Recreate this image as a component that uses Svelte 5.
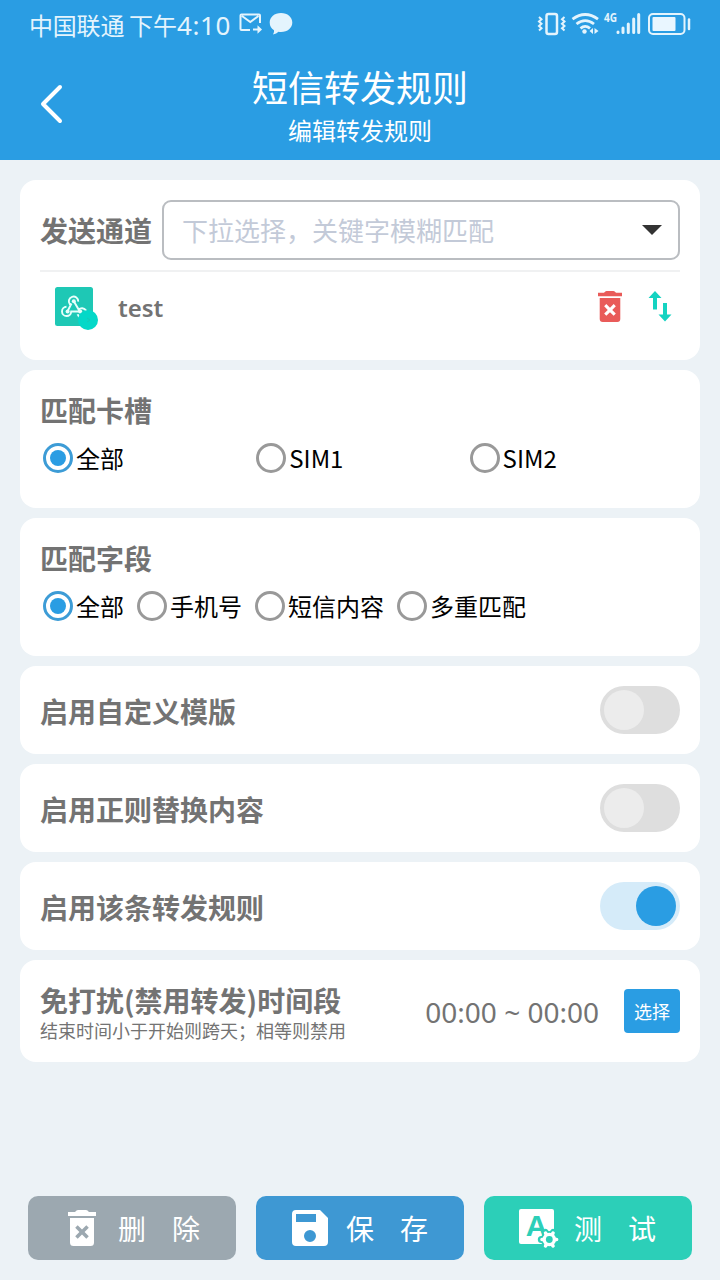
<script>
  const sims = ['全部', 'SIM1', 'SIM2'];
  const fields = ['全部', '手机号', '短信内容', '多重匹配'];
  let sim = $state(0);
  let field = $state(0);
  let switches = $state([
    { label: '启用自定义模版', on: false },
    { label: '启用正则替换内容', on: false },
    { label: '启用该条转发规则', on: true }
  ]);
</script>

{#snippet radio(label, on, pick)}
  <button class="radio" class:on onclick={pick}>
    <span class="ring"></span><span class="radio-label">{label}</span>
  </button>
{/snippet}

{#snippet trash()}
  <path fill-rule="evenodd" d="M0 2H7L8.500 .6Q9.200 0 10 0H18Q18.800 0 19.500 .6L21 2H28V6H0ZM2 8H26V32.500Q26 36 22.500 36H5.500Q2 36 2 32.500ZM9.700 15.200L7.200 17.700 11.400 22 7.200 26.300 9.700 28.800 14 24.600 18.300 28.800 20.800 26.300 16.600 22 20.800 17.700 18.300 15.200 14 19.400Z" />
{/snippet}

<div class="screen">
  <header>
    <div class="status">
      <span class="carrier">中国联通</span>
      <span class="clock">下午<span class="num">4:10</span></span>
      <svg class="mail" width="24" height="22" viewBox="0 0 24 22" fill="none" stroke="#e4f4fd" stroke-width="2">
        <path d="M11 18H2.500Q1.500 18 1.500 17V3.500Q1.500 2.500 2.500 2.500H20Q21 2.500 21 3.500V11M3 4L11.300 10 19.500 4M14 17.500H20" />
        <path d="M18.500 13.300L23 17.500 18.500 21.700Z" fill="#e4f4fd" stroke="none" />
      </svg>
      <svg class="bubble" width="24" height="22" viewBox="0 0 24 22" fill="#e4f4fd">
        <path d="M12 0C18.600 0 23.300 4.200 23.300 9.500S18.600 19 12 19Q10.700 19 9.500 18.800 7.500 21 4 21.500 5.500 19.500 5 17.200 .7 14.500 .7 9.500C.7 4.200 5.400 0 12 0Z" />
      </svg>
      <span class="spacer"></span>
      <svg class="signals" width="154" height="26" viewBox="0 0 154 26" fill="none" stroke="#e4f4fd">
        <rect x="9.500" y="3" width="10.500" height="20" rx="2" stroke-width="2.500" />
        <path stroke-width="2" d="M2 6L4.500 8.200 2 10.500 4.500 12.700 2 15 4.500 17.200 2 19.500M27.500 6L25 8.200 27.500 10.500 25 12.700 27.500 15 25 17.200 27.500 19.500" />
        <path stroke-width="2.800" d="M35.500 8.200Q48.200-1.200 61 8.200M39.500 13Q48.200 6.200 57 13M43.500 17.300Q48.200 13.500 53 17.300" />
        <circle cx="47.500" cy="20.500" r="2.200" fill="#e4f4fd" stroke="none" />
        <path d="M56 17V23L52.500 20ZM57.500 17V23L61.500 20Z" fill="#e4f4fd" stroke="none" />
        <text x="67" y="11" textLength="13" lengthAdjust="spacingAndGlyphs" class="net">4G</text>
        <path stroke-width="3" stroke-linecap="round" d="M81 21V21.500M86 17V21.500M91.300 13V21.500M96.700 8V21.500M101.700 3.500V21.500" />
        <rect x="112" y="3" width="35.500" height="20" rx="4" stroke-width="2" />
        <rect x="115.500" y="6" width="23" height="14" rx="1" fill="#e9f6ff" stroke="none" />
        <path stroke-width="2.500" stroke-linecap="round" d="M152 8.500V18" />
      </svg>
    </div>
    <div class="bar">
      <button class="back" aria-label="返回">
        <svg width="24" height="40" viewBox="0 0 24 40" fill="none" stroke="#fff" stroke-width="4" stroke-linecap="round" stroke-linejoin="round">
          <path d="M20 3L3 20 20 37" />
        </svg>
      </button>
      <div class="titles">
        <h1>短信转发规则</h1>
        <p>编辑转发规则</p>
      </div>
    </div>
  </header>

  <main>
    <section class="card channel">
      <div class="pick">
        <h2>发送通道</h2>
        <div class="select">
          <span>下拉选择，关键字模糊匹配</span>
          <svg width="20" height="10" viewBox="0 0 20 10"><path d="M0 0H20L10 10Z" fill="#333" /></svg>
        </div>
      </div>
      <div class="sender">
        <svg class="hook" width="44" height="44" viewBox="0 0 44 44">
          <rect width="38" height="39" rx="2.500" fill="#1ec8b5" />
          <g fill="none" stroke="#e8fffb" stroke-width="1.900">
            <path d="M14.900 17.300A4.700 4.700 0 1 1 23.200 14.600M18.800 14.200L23.700 22.600A4.600 4.600 0 1 1 22.600 27.200M25.300 24.500H16.200A4.600 4.600 0 1 1 11.500 19.800M12.500 24.300L16.500 16.500" />
          </g>
          <g fill="#e8fffb"><circle cx="18.800" cy="14.300" r="2" /><circle cx="12.600" cy="24.400" r="2" /><circle cx="25.200" cy="24.400" r="2" /></g>
          <circle cx="33" cy="33" r="10" fill="#04d8c8" />
          <path d="M32 31L35 33 32 35" fill="none" stroke="#18c8b8" />
        </svg>
        <span class="name">test</span>
        <svg class="del" width="24" height="31" viewBox="0 0 28 36" fill="#e95b59">{@render trash()}</svg>
        <svg class="sort" width="24" height="31" viewBox="0 0 24 31" fill="#14d3c1">
          <path d="M7 0L13.500 7H9V18.500H5V7H.500ZM17 30.500L10.500 23.500H15V12H19V23.500H23.500Z" />
        </svg>
      </div>
    </section>

    <section class="card options">
      <h2>匹配卡槽</h2>
      <div class="thirds">
        {#each sims as label, i}
          {@render radio(label, sim === i, () => (sim = i))}
        {/each}
      </div>
    </section>

    <section class="card options">
      <h2>匹配字段</h2>
      <div class="inline">
        {#each fields as label, i}
          {@render radio(label, field === i, () => (field = i))}
        {/each}
      </div>
    </section>

    {#each switches as item}
      <section class="card toggle">
        <h2>{item.label}</h2>
        <button class="switch" class:on={item.on} aria-label={item.label} onclick={() => (item.on = !item.on)}><span></span></button>
      </section>
    {/each}

    <section class="card quiet">
      <div class="about">
        <h2>免打扰(禁用转发)时间段</h2>
        <p>结束时间小于开始则跨天；相等则禁用</p>
      </div>
      <span class="range">00:00 ~ 00:00</span>
      <button class="choose">选择</button>
    </section>
  </main>

  <footer>
    <button class="act gray">
      <svg width="28" height="36" viewBox="0 0 28 36" fill="#fff">{@render trash()}</svg>
      <span>删</span><span>除</span>
    </button>
    <button class="act blue">
      <svg width="36" height="36" viewBox="0 0 36 36" fill="#fff">
        <path fill-rule="evenodd" d="M4 0H28L36 8V32Q36 36 32 36H4Q0 36 0 32V4Q0 0 4 0ZM4 4V12H24V4ZM18 20A6 6 0 1 0 18 32A6 6 0 1 0 18 20Z" />
      </svg>
      <span>保</span><span>存</span>
    </button>
    <button class="act green">
      <svg width="40" height="40" viewBox="0 0 40 40">
        <rect y="1" width="35" height="35" rx="2" fill="#fff" />
        <text x="17.500" y="28" text-anchor="middle" class="letter">A</text>
        <g stroke-linejoin="round" stroke-linecap="round">
          <path d="M26.300 24.500L34.300 38.500M34.300 24.500L26.300 38.500M22.300 31.500H38.300" stroke="#2ccfb8" stroke-width="7" />
          <circle cx="30.300" cy="31.500" r="8.500" fill="#2ccfb8" />
          <path d="M26.600 25.100L34 37.900M34 25.100L26.600 37.900M23 31.500H37.600" stroke="#fff" stroke-width="3.600" />
          <circle cx="30.300" cy="31.500" r="6.800" fill="#fff" />
          <circle cx="30.300" cy="31.500" r="3.400" fill="#2ccfb8" />
        </g>
      </svg>
      <span>测</span><span>试</span>
    </button>
  </footer>
</div>

<style>
  :global(body) { margin: 0; }
  .screen {
    width: 720px; height: 1280px; box-sizing: border-box; overflow: hidden;
    display: flex; flex-direction: column; background: #ecf2f6;
    font-family: "Noto Sans CJK SC", sans-serif; color: #737373;
  }
  h1, h2, p { margin: 0; }
  button { border: 0; padding: 0; background: none; font: inherit; color: inherit; }
  svg { display: block; flex: none; overflow: visible; }
  header { height: 160px; background: #2a9de3; color: #fff; }
  .status { height: 48px; display: flex; align-items: center; padding: 0 28px 0 29px; font-size: 24px; line-height: 48px; color: #e4f4fd; }
  .carrier { width: 100px; letter-spacing: -0.2px; padding-top: 1px; }
  .clock { width: 110px; white-space: nowrap; padding-top: 1px; }
  .num { font-family: "Noto Sans", sans-serif; font-size: 26px; letter-spacing: 0.6px; }
  .mail { margin-top: -2px; }
  .bubble { margin: 0 0 0 6px; }
  .spacer { flex: 1; }
  .net { font: bold 13px "Noto Sans", sans-serif; fill: #e4f4fd; stroke: none; }
  .bar { height: 112px; display: flex; align-items: center; }
  .back { margin-left: 40px; width: 24px; }
  .titles { flex: 1; margin-right: 64px; text-align: center; }
  h1 { font-size: 36px; line-height: 48px; font-weight: 400; margin-top: 4px; }
  .titles p { font-size: 24px; line-height: 40px; }
  main { display: flex; flex-direction: column; gap: 10px; padding: 20px 20px 0; flex: 1; }
  .card { background: #fff; border-radius: 16px; box-sizing: border-box; padding: 0 20px; }
  h2 { font-size: 28px; line-height: 40px; font-weight: 700; white-space: nowrap; }
  .channel { height: 180px; padding-top: 20px; }
  .pick { display: flex; align-items: center; justify-content: space-between; padding-bottom: 10px; border-bottom: 2px solid #f0f1f2; }
  .select { width: 518px; height: 60px; box-sizing: border-box; border: 2px solid #babdc1; border-radius: 9px; display: flex; align-items: center; justify-content: space-between; padding: 0 16px 0 18px; font-size: 26px; color: #c3cad8; }
  .select span { padding-bottom: 1px; }
  .sender { display: flex; align-items: center; height: 70px; padding: 0 8px 0 15px; }
  .hook { margin-top: 3px; }
  .name { flex: 1; margin-left: 19px; font: 600 24px "Noto Sans", sans-serif; }
  .del { margin: -2px 26px 0 0; }
  .sort { margin-top: -2px; }
  .options { height: 138px; padding-top: 20px; }
  .radio { display: flex; align-items: center; gap: 3px; color: #000; font-size: 24px; line-height: 36px; white-space: nowrap; }
  .ring { width: 30px; height: 30px; box-sizing: border-box; border: 3px solid #999; border-radius: 50%; display: grid; place-items: center; }
  .on .ring { border-color: #3d9cd6; }
  .on .ring::after { content: ""; width: 16px; height: 16px; border-radius: 50%; background: #2a9de3; }
  .thirds { display: grid; grid-template-columns: repeat(3, 213.3px); padding: 10px 0 0 3px; }
  .inline { display: flex; gap: 13px; padding: 10px 0 0 3px; }
  .toggle { height: 88px; display: flex; align-items: center; justify-content: space-between; }
  .toggle h2 { padding-top: 1px; }
  .switch { width: 80px; height: 48px; border-radius: 24px; background: #dedede; padding: 4px; display: flex; }
  .switch span { width: 40px; height: 40px; border-radius: 50%; background: #ececec; }
  .switch.on { background: #d5ebf9; justify-content: flex-end; }
  .switch.on span { background: #2a9de3; }
  .quiet { height: 102px; display: flex; align-items: center; }
  .about { width: 340px; padding-top: 3px; }
  .about h2 { line-height: 36px; }
  .about p { font-size: 18px; line-height: 25px; white-space: nowrap; }
  .range { flex: 1; text-align: right; font-family: "Noto Sans", sans-serif; font-size: 28px; white-space: nowrap; margin-right: 25px; padding-top: 2px; }
  .choose { width: 56px; height: 44px; border-radius: 4px; background: #2a9de3; color: #fff; font-size: 18px; }
  footer { display: grid; grid-template-columns: repeat(3, 1fr); gap: 20px; padding: 0 28px 20px; }
  .act { box-sizing: border-box; height: 64px; border-radius: 10px; display: flex; align-items: center; padding-left: 40px; color: #fff; font-size: 28px; }
  .act svg + span { margin-left: 22px; }
  .act span + span { margin-left: 26px; }
  .gray { background: #9ca8b0; }
  .blue { background: #3e98d3; padding-left: 36px; }
  .act.blue svg + span { margin-left: 18px; }
  .green { background: #2ccfb8; padding-left: 35px; }
  .act.green svg + span { margin-left: 15px; }
  .letter { font: bold 30px "Liberation Sans", sans-serif; fill: #2ccfb8; }
  .signals { margin-right: 1px; }
</style>
